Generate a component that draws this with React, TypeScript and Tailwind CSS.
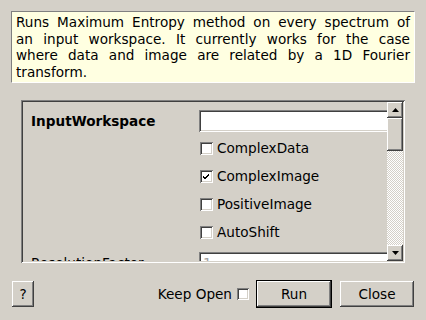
const raised =
  "bg-[#d4d0c8] shadow-[inset_-1px_-1px_#404040,inset_1px_1px_#ffffff,inset_-2px_-2px_#808080,inset_2px_2px_#d4d0c8]";
const sunken =
  "shadow-[inset_1px_1px_#808080,inset_-1px_-1px_#ffffff,inset_2px_2px_#404040,inset_-2px_-2px_#d4d0c8]";

const Check = ({ checked = false, size = "w-[13px] h-[13px]" }: { checked?: boolean; size?: string }) => (
  <div className={`${size} bg-white ${sunken} flex items-center justify-center shrink-0`}>
    {checked && (
      <svg width="7" height="7" viewBox="0 0 7 7">
        <path d="M0 3 L2 5 L6 1 M0 4 L2 6 L6 2" stroke="#000" strokeWidth="1" fill="none" />
      </svg>
    )}
  </div>
);

const Arrow = ({ up }: { up?: boolean }) => (
  <div className={`w-[16px] h-[16px] ${raised} flex items-center justify-center shrink-0`}>
    <svg width="7" height="4" viewBox="0 0 7 4">
      <path d={up ? "M3.5 0 L7 4 L0 4 Z" : "M0 0 L7 0 L3.5 4 Z"} fill="#000" />
    </svg>
  </div>
);

const options = [
  { label: "ComplexData", checked: false },
  { label: "ComplexImage", checked: true },
  { label: "PositiveImage", checked: false },
  { label: "AutoShift", checked: false },
];

const descLines = [
  "Runs Maximum Entropy method on every spectrum of",
  "an input workspace. It currently works for the case",
  "where data and image are related by a 1D Fourier",
];

export default function App() {
  return (
    <div className="w-[426px] h-[320px] bg-[#d4d0c8] text-black text-[13.6px] font-['DejaVu_Sans',sans-serif] pt-[11px] pl-[11px] overflow-hidden">
      {/* description */}
      <div className="w-[404px] h-[72px] bg-[#ffffe1] border border-t-[#808080] border-l-[#808080] border-r-white border-b-white pl-[4px] pr-[4px] pt-[2px] leading-[16.5px]">
        {descLines.map((l) => (
          <div key={l} className="text-justify [text-align-last:justify]">
            {l}
          </div>
        ))}
        <div>transform.</div>
      </div>

      {/* properties frame */}
      <div className={`ml-[10px] mt-[17px] w-[384px] h-[163px] p-[2px] ${sunken} flex`}>
        <div className="flex-1 overflow-hidden">
          <div className="w-[380px] pl-[8px] pt-[8px]">
            <div className="flex items-center h-[22px]">
              <div className="w-[168px] font-bold">InputWorkspace</div>
              <div className={`w-[200px] h-[22px] bg-white ${sunken}`} />
            </div>
            <div className="pt-[2px]">
              {options.map((o) => (
                <div key={o.label} className="flex items-center h-[28px] pl-[169px] gap-[4px]">
                  <Check checked={o.checked} />
                  <span>{o.label}</span>
                </div>
              ))}
            </div>
            <div className="flex items-center h-[22px] mt-[6px]">
              <div className="w-[168px]">ResolutionFactor</div>
              <div className={`w-[200px] h-[22px] bg-white ${sunken} pl-[4px] text-[#a0a0a0] leading-[22px]`}>1</div>
            </div>
          </div>
        </div>
        <div className="w-[16px] flex flex-col">
          <Arrow up />
          <div className={`h-[33px] ${raised}`} />
          <div className="flex-1 bg-[repeating-conic-gradient(#ffffff_0_25%,#d4d0c8_0_50%)] bg-[length:2px_2px]" />
          <Arrow />
        </div>
      </div>

      {/* buttons */}
      <div className="mt-[17px] flex items-center w-[403px] h-[28px]">
        <div className={`ml-[1px] w-[22px] h-[26px] ${raised} flex items-center justify-center`}>?</div>
        <div className="flex-1" />
        <span>Keep Open</span>
        <div className="ml-[5px]">
          <Check size="w-[12px] h-[12px]" />
        </div>
        <div className="ml-[7px] w-[76px] h-[28px] border border-black">
          <div className={`w-full h-full ${raised} flex items-center justify-center`}>Run</div>
        </div>
        <div className={`ml-[8px] w-[74px] h-[26px] ${raised} flex items-center justify-center`}>Close</div>
      </div>
    </div>
  );
}
